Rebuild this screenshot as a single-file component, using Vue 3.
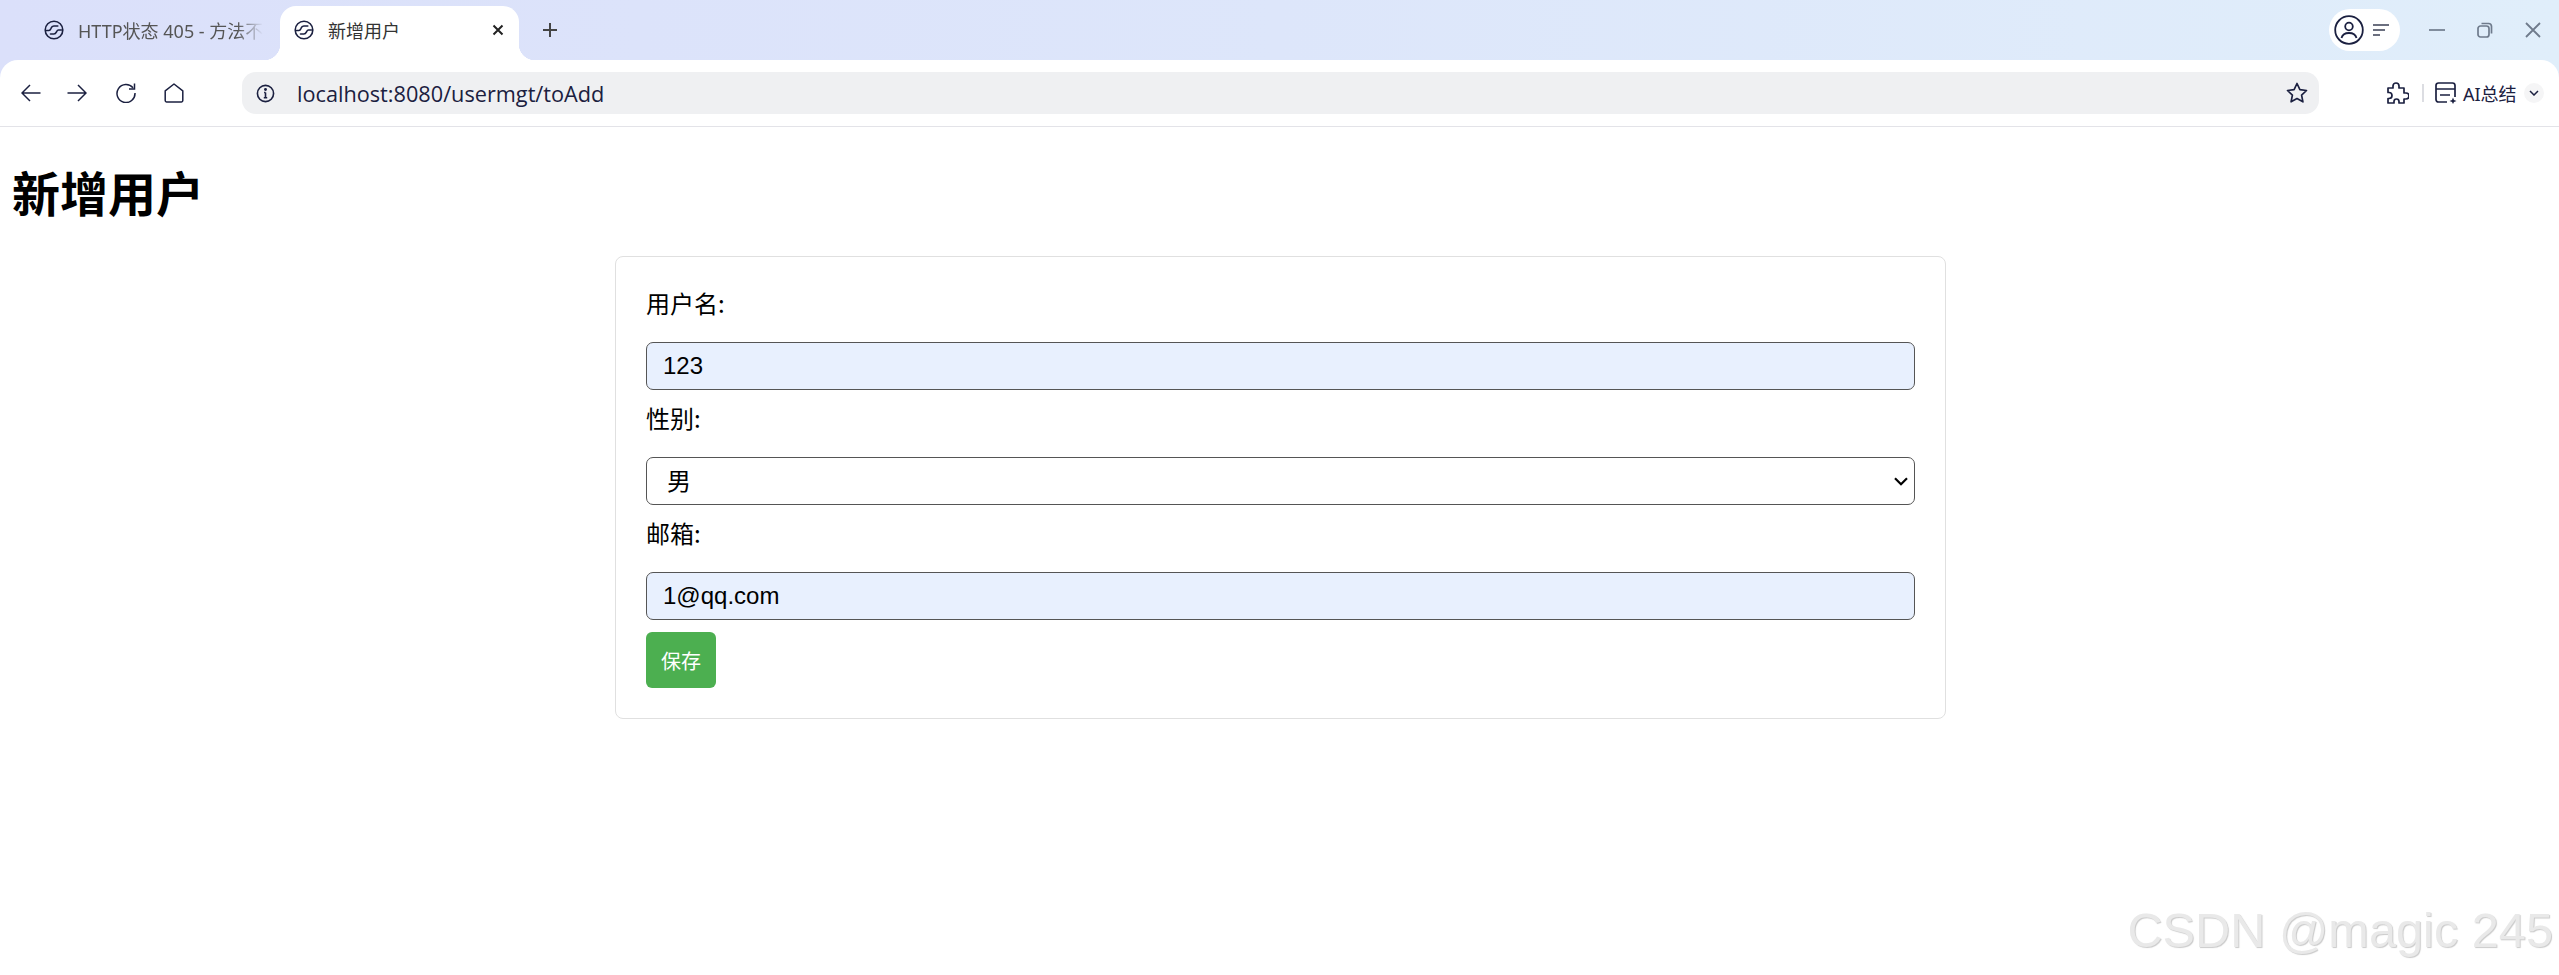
<script setup>
import { ref } from 'vue';

const username = ref('123');
const gender = ref('男');
const email = ref('1@qq.com');
</script>

<template>
  <div class="page">
    <header class="browser">
      <div class="tabstrip">
        <div class="tab">
          <svg class="favicon" viewBox="0 0 20 20" fill="none" stroke="#1b2040" stroke-width="1.600"><circle cx="10" cy="10" r="8.800"/><path d="M2.500 10.500h2.500c1.200 0 1.500-1 2-2.200C7.500 7 8.300 6 9.800 6h4M17.500 10h-3c-1 0-1.500.8-2 1.800-.6 1.300-1.300 2.200-2.700 2.200H6.500" stroke-linecap="round"/></svg>
          <span class="tab-title faded">HTTP状态 405 - 方法不</span>
        </div>
        <div class="tab active">
          <svg class="favicon" viewBox="0 0 20 20" fill="none" stroke="#1b2040" stroke-width="1.600"><circle cx="10" cy="10" r="8.800"/><path d="M2.500 10.500h2.500c1.200 0 1.500-1 2-2.200C7.500 7 8.300 6 9.800 6h4M17.500 10h-3c-1 0-1.500.8-2 1.800-.6 1.300-1.300 2.200-2.700 2.200H6.500" stroke-linecap="round"/></svg>
          <span class="tab-title">新增用户</span>
          <svg class="tab-close" viewBox="0 0 12 12" fill="none" stroke="#222" stroke-width="2"><path d="M1.500 1.500l9 9M10.500 1.500l-9 9"/></svg>
        </div>
        <svg class="new-tab" viewBox="0 0 16 16" fill="none" stroke="#444" stroke-width="2"><path d="M8 1v14M1 8h14"/></svg>
        <div class="profile">
          <svg class="avatar" viewBox="0 0 30 30" fill="none" stroke="#1b2040" stroke-width="1.800"><circle cx="15" cy="15" r="13.800"/><circle cx="15" cy="11.500" r="3.800"/><path d="M7.500 23c1-4 4-5 7.500-5s6.500 1 7.500 5"/></svg>
          <svg class="lines" viewBox="0 0 16 12" fill="none" stroke="#3b4056" stroke-width="1.500"><path d="M0 1h16M0 6h12M0 11h7"/></svg>
        </div>
        <div class="win-controls">
          <svg viewBox="0 0 16 16" fill="none" stroke="#6f7b8c" stroke-width="1.700"><path d="M0 8h16"/></svg>
          <svg viewBox="0 0 16 16" fill="none" stroke="#6f7b8c" stroke-width="1.700"><rect x="1" y="4" width="11" height="11" rx="2.500"/><path d="M4.500 1.500h7c2 0 3 1 3 3v7"/></svg>
          <svg viewBox="0 0 16 16" fill="none" stroke="#6f7b8c" stroke-width="1.800"><path d="M1 1l14 14M15 1L1 15"/></svg>
        </div>
      </div>
      <div class="toolbar">
        <div class="nav-icons">
          <svg viewBox="0 0 20 20" fill="none" stroke="#1b2040" stroke-width="1.500"><path d="M19.500 10H1M9 2l-8 8 8 8"/></svg>
          <svg viewBox="0 0 20 20" fill="none" stroke="#1b2040" stroke-width="1.500"><path d="M.5 10H19M11 2l8 8-8 8"/></svg>
          <svg class="reload" viewBox="0 0 20 20" fill="none" stroke="#1b2040" stroke-width="1.500"><path d="M17 4.800A9 9 0 1 0 19 10M18.500.5v5.500H13"/></svg>
          <svg class="home" viewBox="0 0 20 20" fill="none" stroke="#1b2040" stroke-width="1.500"><path d="M10 1L1.200 7.800v9.700c0 .9.500 1.400 1.300 1.400h15c.8 0 1.300-.5 1.300-1.400V7.800z" stroke-linejoin="round"/></svg>
        </div>
        <div class="address">
          <svg class="info" viewBox="0 0 20 20" fill="none" stroke="#1b2040" stroke-width="1.700"><circle cx="10" cy="10" r="8.500"/><path d="M10 9v5.500M8.200 14.500h3.600M8.500 9H10" /><circle cx="10" cy="5.800" r=".7" fill="#1b2040"/></svg>
          <span class="url">localhost:8080/usermgt/toAdd</span>
          <svg class="star" viewBox="0 0 22 22" fill="none" stroke="#1b2040" stroke-width="1.700" stroke-linejoin="round"><path d="M11 1.500l2.900 6.200 6.600.8-4.900 4.600 1.300 6.700L11 16.500l-5.900 3.300 1.300-6.700L1.500 8.500l6.600-.8z"/></svg>
        </div>
        <div class="extras">
          <svg class="puzzle" viewBox="0 0 24 24" fill="none" stroke="#1b2040" stroke-width="1.700" stroke-linejoin="round"><path d="M3 7h5V5a3 3 0 0 1 6 0v2h5v5h2a3 3 0 0 1 0 6h-2v4h-5v-1.500a2.500 2.500 0 0 0-5 0V22H3v-4.500h1a3 3 0 0 0 0-6H3z"/></svg>
          <span class="divider"></span>
          <svg class="ai-icon" viewBox="0 0 22 22" fill="none" stroke="#1b2040" stroke-width="1.700"><path d="M12 20H3.500C2 20 1 19 1 17.500v-14C1 2 2 1 3.500 1h14C19 1 20 2 20 3.500V15M1 7h19M5 13h10"/><path d="M18 15.500l1 2.500 2.500 1-2.500 1-1 2-1-2-2.500-1 2.500-1z" fill="#1b2040" stroke="none"/></svg>
          <span class="ai-label">AI总结</span>
          <span class="ai-more">
            <svg viewBox="0 0 10 6" fill="none" stroke="#1b2040" stroke-width="1.500"><path d="M1 1l4 4 4-4"/></svg>
          </span>
        </div>
      </div>
    </header>

    <main class="content">
      <h1>新增用户</h1>
      <form class="card" @submit.prevent>
        <label class="field-label">用户名:</label>
        <input class="field autofilled" type="text" v-model="username" />
        <label class="field-label">性别:</label>
        <div class="select-wrap">
          <select class="field plain" v-model="gender">
            <option>男</option>
            <option>女</option>
          </select>
          <svg class="chevron" viewBox="0 0 14 9" fill="none" stroke="#000" stroke-width="2.200"><path d="M1 1.200l6 6 6-6"/></svg>
        </div>
        <label class="field-label">邮箱:</label>
        <input class="field autofilled" type="text" v-model="email" />
        <button class="save" type="submit">保存</button>
      </form>
    </main>

    <div class="watermark">CSDN @magic 245</div>
  </div>
</template>

<style>
html, body {
  margin: 0;
  background: #fff;
}
</style>

<style scoped>
.page {
  position: relative;
  height: 975px;
  overflow: hidden;
  font-family: "Liberation Sans", "Noto Sans CJK SC", sans-serif;
  color: #000;
}

.browser {
  background: linear-gradient(90deg, #dbe0fa 0%, #dde6fa 50%, #e0eefa 100%);
}

.tabstrip {
  display: flex;
  align-items: flex-end;
  height: 60px;
  padding-left: 44px;
}

.tab {
  display: flex;
  align-items: center;
  height: 54px;
  width: 236px;
  padding-bottom: 6px;
  box-sizing: border-box;
  flex-shrink: 0;
}

.favicon {
  width: 20px;
  height: 20px;
  flex-shrink: 0;
}

.tab-title {
  margin-left: 14px;
  font-family: "Noto Sans", "Noto Sans CJK SC", sans-serif;
  font-size: 18px;
  color: #333;
  white-space: nowrap;
}

.faded {
  color: #555;
  -webkit-mask-image: linear-gradient(90deg, #000 86%, transparent 100%);
  mask-image: linear-gradient(90deg, #000 86%, transparent 100%);
}

.tab.active {
  position: relative;
  width: 239px;
  margin-right: 23px;
  padding-left: 14px;
  background: #fff;
  border-radius: 16px 16px 0 0;
}

.tab.active::before,
.tab.active::after {
  content: "";
  position: absolute;
  bottom: 0;
  width: 16px;
  height: 16px;
}

.tab.active::before {
  left: -16px;
  background: radial-gradient(circle at 0 0, transparent 16px, #fff 16.500px);
}

.tab.active::after {
  right: -16px;
  background: radial-gradient(circle at 100% 0, transparent 16px, #fff 16.500px);
}

.tab-close {
  width: 12px;
  height: 12px;
  margin-left: auto;
  margin-right: 15px;
}

.new-tab {
  width: 16px;
  height: 16px;
  margin-bottom: 22px;
}

.profile {
  display: flex;
  align-items: center;
  gap: 9px;
  width: 71px;
  height: 42px;
  margin-left: auto;
  margin-bottom: 9px;
  padding-left: 5px;
  box-sizing: border-box;
  background: #fff;
  border-radius: 21px;
}

.avatar {
  width: 30px;
  height: 30px;
}

.lines {
  width: 16px;
  height: 12px;
}

.win-controls {
  display: flex;
  gap: 32px;
  margin-left: 29px;
  margin-right: 18px;
  margin-bottom: 22px;
}

.win-controls svg {
  width: 16px;
  height: 16px;
}

.toolbar {
  display: flex;
  align-items: center;
  height: 67px;
  background: #fff;
  border-radius: 18px 18px 0 0;
  border-bottom: 1px solid #e3e3e8;
  box-sizing: border-box;
}

.nav-icons {
  display: flex;
  gap: 26px;
  width: 242px;
  padding-left: 21px;
  box-sizing: border-box;
}

.nav-icons svg {
  width: 20px;
  height: 20px;
}

.nav-icons .reload {
  margin-left: 3px;
}

.nav-icons .home {
  margin-left: 2px;
}

.address {
  display: flex;
  align-items: center;
  width: 2077px;
  height: 42px;
  padding: 0 11px 0 14px;
  box-sizing: border-box;
  background: #eff0f2;
  border-radius: 14px;
}

.info {
  width: 19px;
  height: 19px;
}

.url {
  margin-left: 22px;
  font-family: "Open Sans", sans-serif;
  font-size: 21.700px;
  color: #1b2040;
}

.star {
  width: 22px;
  height: 22px;
  margin-left: auto;
}

.extras {
  display: flex;
  align-items: center;
  padding-left: 66px;
}

.puzzle {
  width: 24px;
  height: 24px;
}

.divider {
  width: 2px;
  height: 18px;
  margin: 0 11px 0 13px;
  background: #dcdde2;
}

.ai-icon {
  width: 22px;
  height: 22px;
}

.ai-label {
  margin-left: 6px;
  font-family: "Noto Sans", "Noto Sans CJK SC", sans-serif;
  font-size: 18px;
  color: #1b2040;
}

.ai-more {
  display: flex;
  align-items: center;
  justify-content: center;
  width: 20px;
  height: 20px;
  margin-left: 7px;
  background: #f5f5f6;
  border-radius: 50%;
}

.ai-more svg {
  width: 10px;
  height: 6px;
}

.content {
  padding: 0 12px;
}

h1 {
  margin: 29px 0 30px;
  font-family: "Noto Sans CJK SC", sans-serif;
  font-size: 48px;
  line-height: 70px;
  font-weight: 700;
}

.card {
  display: flex;
  flex-direction: column;
  align-items: flex-start;
  width: 1331px;
  margin-left: 603px;
  padding: 30px;
  box-sizing: border-box;
  border: 1px solid #e0e0e0;
  border-radius: 8px;
}

.field-label {
  height: 32px;
  margin-bottom: 23px;
  font-family: "Noto Sans CJK SC", sans-serif;
  font-size: 24px;
  line-height: 32px;
}

.field {
  width: 100%;
  height: 48px;
  margin-bottom: 12px;
  padding: 0 16px;
  box-sizing: border-box;
  border: 1px solid #555;
  border-radius: 7px;
  background: #fff;
  font-family: "Liberation Sans", "Noto Sans CJK SC", sans-serif;
  font-size: 24px;
  color: #000;
  outline: none;
}

.autofilled {
  background: #e8f0fe;
}

.select-wrap {
  position: relative;
  width: 100%;
}

.plain {
  display: block;
  padding-left: 20px;
  appearance: none;
  -webkit-appearance: none;
}

.chevron {
  position: absolute;
  top: 20px;
  right: 7px;
  width: 14px;
  height: 9px;
  pointer-events: none;
}

.save {
  width: 70px;
  height: 56px;
  padding: 0;
  border: none;
  border-radius: 6px;
  background: #4caf50;
  font-family: "Noto Sans CJK SC", sans-serif;
  font-size: 20px;
  color: #fff;
}

.watermark {
  position: absolute;
  right: 6px;
  top: 898px;
  font-family: "Liberation Sans", sans-serif;
  font-size: 48.700px;
  line-height: 64px;
  color: #e9e9e9;
  text-shadow: 1px 1px 1px #cacaca;
  white-space: nowrap;
}
</style>
